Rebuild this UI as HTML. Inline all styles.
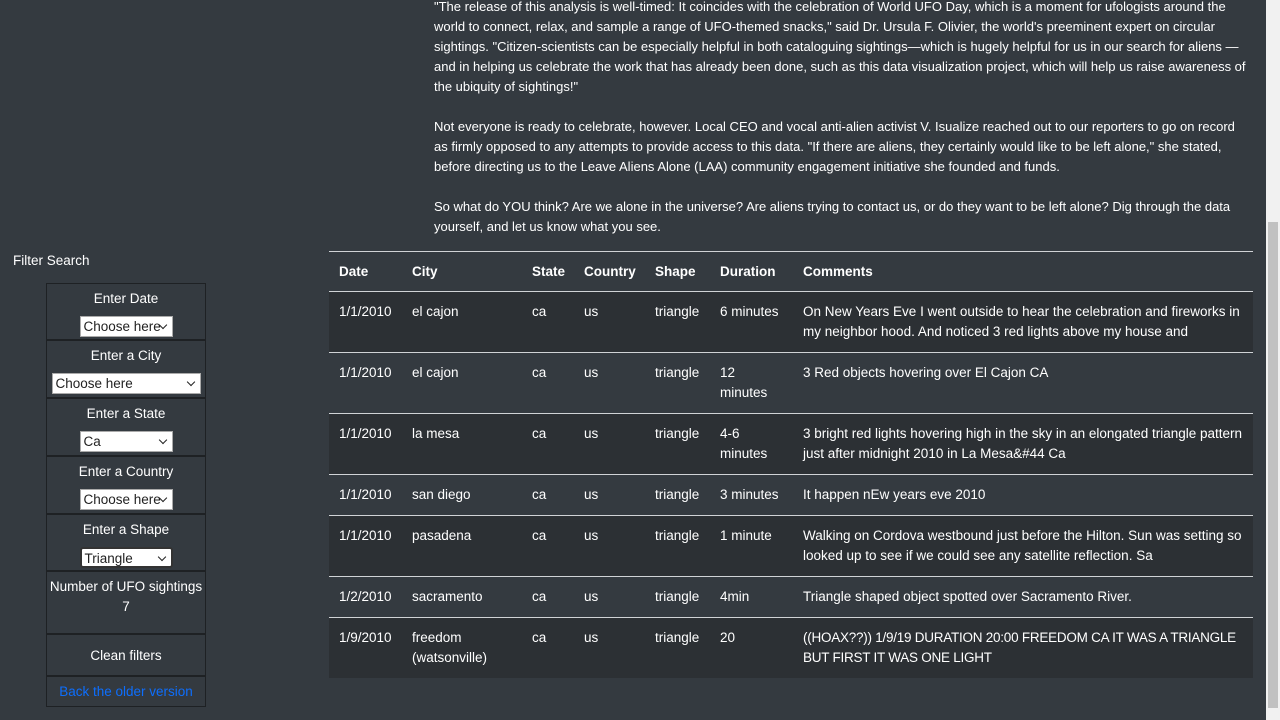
<!DOCTYPE html>
<html><head><meta charset="utf-8"><style>
*{box-sizing:border-box;margin:0;padding:0}
body{width:1280px;height:720px;overflow:hidden;background:#343a40;color:#fff;font-family:"Liberation Sans",sans-serif;font-size:13px;position:relative}
.p{position:absolute;left:434px;width:818px;line-height:20px;font-size:13px}
.fs{position:absolute;left:13px;top:251px;font-size:13.5px;line-height:20px}
.box{position:absolute;left:46px;top:283px;width:160px;border:1px solid #1e2124}
.sec{border-bottom:2px solid #1e2124;text-align:center;font-size:13.5px;line-height:20px}
.sel{display:inline-block;background:#fff;color:#222;text-align:left;height:21px;line-height:20px;padding-left:3px;border:1px solid #aaa;position:relative;font-size:13.5px;vertical-align:top}
.sel:after{content:"";position:absolute;right:6px;top:5px;width:5px;height:5px;border-right:1.5px solid #222;border-bottom:1.5px solid #222;transform:rotate(45deg)}
table{position:absolute;left:329px;top:251px;width:924px;border-collapse:collapse;font-size:13.5px;line-height:20px;table-layout:fixed}
th,td{text-align:left;vertical-align:top;padding:10px 8px 10px 10px;border-top:1.5px solid #d0d3d6;white-space:normal}
th{font-weight:bold;padding:10px 8px 9px 10px}
tbody tr:nth-child(odd){background:#2c3034}
.sb{position:absolute;left:1266px;top:0;width:14px;height:720px;background:#f1f1f1}
.th{position:absolute;left:1268px;top:222px;width:10px;height:486px;background:#c1c1c1}
</style></head><body>
<div class="p" style="top:-3px">"The release of this analysis is well-timed: It coincides with the celebration of World UFO Day, which is a moment for ufologists around the world to connect, relax, and sample a range of UFO-themed snacks," said Dr. Ursula F. Olivier, the world's preeminent expert on circular sightings. "Citizen-scientists can be especially helpful in both cataloguing sightings—which is hugely helpful for us in our search for aliens —and in helping us celebrate the work that has already been done, such as this data visualization project, which will help us raise awareness of the ubiquity of sightings!"</div>
<div class="p" style="top:117px">Not everyone is ready to celebrate, however. Local CEO and vocal anti-alien activist V. Isualize reached out to our reporters to go on record as firmly opposed to any attempts to provide access to this data. "If there are aliens, they certainly would like to be left alone," she stated, before directing us to the Leave Aliens Alone (LAA) community engagement initiative she founded and funds.</div>
<div class="p" style="top:197px">So what do YOU think? Are we alone in the universe? Are aliens trying to contact us, or do they want to be left alone? Dig through the data yourself, and let us know what you see.</div>
<div class="fs">Filter Search</div>
<div class="box">
<div class="sec" style="height:57px;padding-top:5px">Enter Date<br><span class="sel" style="width:93px;margin-top:7px">Choose here</span></div>
<div class="sec" style="height:58px;padding-top:5px">Enter a City<br><span class="sel" style="width:149px;margin-top:7px">Choose here</span></div>
<div class="sec" style="height:58px;padding-top:5px">Enter a State<br><span class="sel" style="width:93px;margin-top:7px">Ca</span></div>
<div class="sec" style="height:58px;padding-top:5px">Enter a Country<br><span class="sel" style="width:93px;margin-top:7px">Choose here</span></div>
<div class="sec" style="height:57px;padding-top:5px">Enter a Shape<br><span class="sel" style="width:93px;margin-top:7px;border:2px solid #333;border-radius:3px">Triangle</span></div>
<div class="sec" style="height:63px;padding-top:5px">Number of UFO sightings<br>7</div>
<div class="sec" style="height:42px;padding-top:11px">Clean filters</div>
<div class="sec" style="height:29px;padding-top:5px;border:0;color:#0d6efd">Back the older version</div>
</div>
<table>
<colgroup><col style="width:73px"><col style="width:120px"><col style="width:52px"><col style="width:71px"><col style="width:65px"><col style="width:83px"><col></colgroup>
<thead><tr><th>Date</th><th>City</th><th>State</th><th>Country</th><th>Shape</th><th>Duration</th><th>Comments</th></tr></thead>
<tbody>
<tr><td>1/1/2010</td><td>el cajon</td><td>ca</td><td>us</td><td>triangle</td><td>6 minutes</td><td>On New Years Eve I went outside to hear the celebration and fireworks in my neighbor hood. And noticed 3 red lights above my house and</td></tr>
<tr><td>1/1/2010</td><td>el cajon</td><td>ca</td><td>us</td><td>triangle</td><td>12 minutes</td><td>3 Red objects hovering over El Cajon CA</td></tr>
<tr><td>1/1/2010</td><td>la mesa</td><td>ca</td><td>us</td><td>triangle</td><td>4-6 minutes</td><td>3 bright red lights hovering high in the sky in an elongated triangle pattern just after midnight 2010 in La Mesa&amp;#44 Ca</td></tr>
<tr><td>1/1/2010</td><td>san diego</td><td>ca</td><td>us</td><td>triangle</td><td>3 minutes</td><td>It happen nEw years eve 2010</td></tr>
<tr><td>1/1/2010</td><td>pasadena</td><td>ca</td><td>us</td><td>triangle</td><td>1 minute</td><td>Walking on Cordova westbound just before the Hilton. Sun was setting so looked up to see if we could see any satellite reflection. Sa</td></tr>
<tr><td>1/2/2010</td><td>sacramento</td><td>ca</td><td>us</td><td>triangle</td><td>4min</td><td>Triangle shaped object spotted over Sacramento River.</td></tr>
<tr><td>1/9/2010</td><td>freedom (watsonville)</td><td>ca</td><td>us</td><td>triangle</td><td>20</td><td style="letter-spacing:-0.25px">((HOAX??)) 1/9/19 DURATION 20:00 FREEDOM CA IT WAS A TRIANGLE BUT FIRST IT WAS ONE LIGHT</td></tr>
</tbody></table>
<div class="sb"></div><div class="th"></div>
</body></html>
